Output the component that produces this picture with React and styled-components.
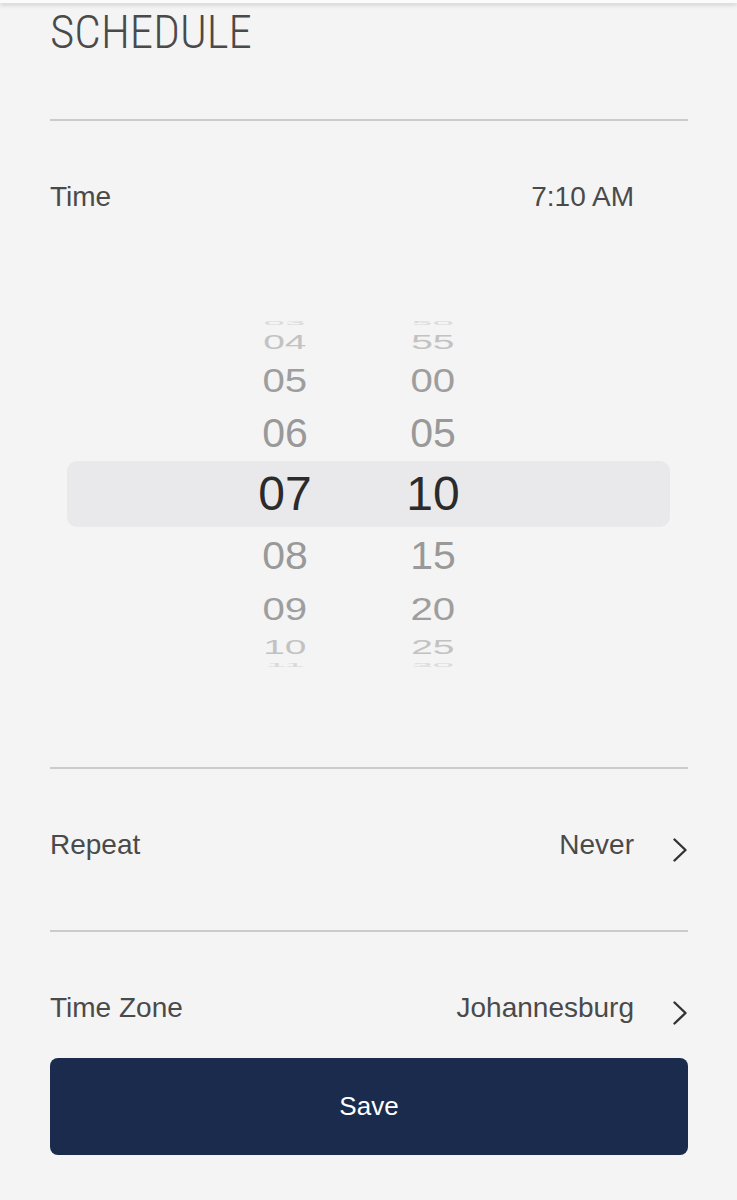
import React from "react";
import styled, { createGlobalStyle } from "styled-components";

const Global = createGlobalStyle`
  html, body { margin: 0; padding: 0; background: #f4f4f4; }
  body { font-family: "Liberation Sans", Arial, sans-serif; color: #4a4a4a; }
`;

const Page = styled.div`
  min-height: 1200px;
  background: #f4f4f4;
  display: flex;
  flex-direction: column;
`;

const TopEdge = styled.div`
  height: 3px;
  background: #fbfbfb;
  box-shadow: 0 2px 4px rgba(0, 0, 0, 0.18);
  position: relative;
  z-index: 1;
`;

const Content = styled.div`
  padding: 0 49px 0 50px;
  display: flex;
  flex-direction: column;
`;

const Title = styled.h1`
  margin: 0;
  height: 116px;
  font-family: Roboto, "DejaVu Sans", sans-serif;
  font-weight: 300;
  font-stretch: 85%;
  font-size: 47px;
  line-height: 58px;
  color: #4a4a4a;
  letter-spacing: 0;
`;

const Divider = styled.div`
  height: 2px;
  background: #cbcbcb;
`;

const Row = styled.div`
  display: flex;
  align-items: center;
  justify-content: space-between;
  height: 30px;
  padding: 61px 0 ${(p) => p.$bottom}px;
`;

const Label = styled.span`
  font-size: 28px;
  line-height: 30px;
  color: #4a4a4a;
`;

const Right = styled.div`
  display: flex;
  align-items: center;
  gap: 38px;
  padding-right: ${(p) => (p.$noChevron ? 54 : 0)}px;
`;

const Chevron = styled.svg`
  width: 16px;
  height: 24px;
  margin: 5px 0 -5px;
  display: block;
`;

const Picker = styled.div`
  padding: 42px 18px 98px 17px;
  display: flex;
  flex-direction: column;
`;

const WheelRow = styled.div`
  height: ${(p) => p.$h}px;
  display: flex;
  align-items: center;
  padding-left: 168px;
  gap: 48px;
  border-radius: 10px;
  background: ${(p) => (p.$selected ? "#e9e9eb" : "transparent")};
`;

const Cell = styled.div`
  width: 100px;
  display: flex;
  justify-content: center;
`;

const Digits = styled.span`
  display: inline-block;
  font-family: "Liberation Sans", Arial, sans-serif;
  font-size: ${(p) => (p.$selected ? 48 : 41)}px;
  line-height: 1;
  color: ${(p) => p.$color};
  white-space: nowrap;
`;

const SaveButton = styled.button`
  height: 97px;
  width: 100%;
  border: none;
  border-radius: 8px;
  background: #1a2b4d;
  color: #ffffff;
  font-family: "Liberation Sans", Arial, sans-serif;
  font-size: 26px;
  cursor: pointer;
`;

const wheel = [
  { h: 14, hour: "03", min: "50", sy: 0.15, sx: 0.92, color: "#dadada" },
  { h: 26, hour: "04", min: "55", sy: 0.48, sx: 0.95, color: "#c2c2c2" },
  { h: 50, hour: "05", min: "00", sy: 0.82, sx: 0.98, color: "#9e9e9e" },
  { h: 56, hour: "06", min: "05", sy: 1, sx: 1, color: "#999999" },
  { h: 66, hour: "07", min: "10", sy: 1, sx: 1, color: "#2b2b2b", selected: true },
  { h: 58, hour: "08", min: "15", sy: 0.96, sx: 1, color: "#999999" },
  { h: 48, hour: "09", min: "20", sy: 0.76, sx: 0.98, color: "#9e9e9e" },
  { h: 28, hour: "10", min: "25", sy: 0.5, sx: 0.95, color: "#c2c2c2" },
  { h: 8, hour: "11", min: "30", sy: 0.13, sx: 0.92, color: "#dadada" },
];

const ChevronIcon = () => (
  <Chevron viewBox="0 0 16 24">
    <polyline
      points="2.5,1.5 13.5,12 2.5,22.5"
      fill="none"
      stroke="#333"
      strokeWidth="2.4"
      strokeLinecap="round"
      strokeLinejoin="round"
    />
  </Chevron>
);

export default function App() {
  return (
    <Page>
      <Global />
      <TopEdge />
      <Content>
        <Title>SCHEDULE</Title>
        <Divider />
        <Row $bottom={61}>
          <Label>Time</Label>
          <Right $noChevron>
            <Label>7:10 AM</Label>
          </Right>
        </Row>
        <Picker>
          {wheel.map((r) => (
            <WheelRow key={r.hour} $h={r.h} $selected={r.selected}>
              <Cell>
                <Digits
                  $selected={r.selected}
                  $color={r.color}
                  style={{ transform: `scale(${r.sx}, ${r.sy})` }}
                >
                  {r.hour}
                </Digits>
              </Cell>
              <Cell>
                <Digits
                  $selected={r.selected}
                  $color={r.color}
                  style={{ transform: `scale(${r.sx}, ${r.sy})` }}
                >
                  {r.min}
                </Digits>
              </Cell>
            </WheelRow>
          ))}
        </Picker>
        <Divider />
        <Row $bottom={70}>
          <Label>Repeat</Label>
          <Right>
            <Label>Never</Label>
            <ChevronIcon />
          </Right>
        </Row>
        <Divider />
        <Row $bottom={35}>
          <Label>Time Zone</Label>
          <Right>
            <Label>Johannesburg</Label>
            <ChevronIcon />
          </Right>
        </Row>
        <SaveButton>Save</SaveButton>
      </Content>
    </Page>
  );
}
